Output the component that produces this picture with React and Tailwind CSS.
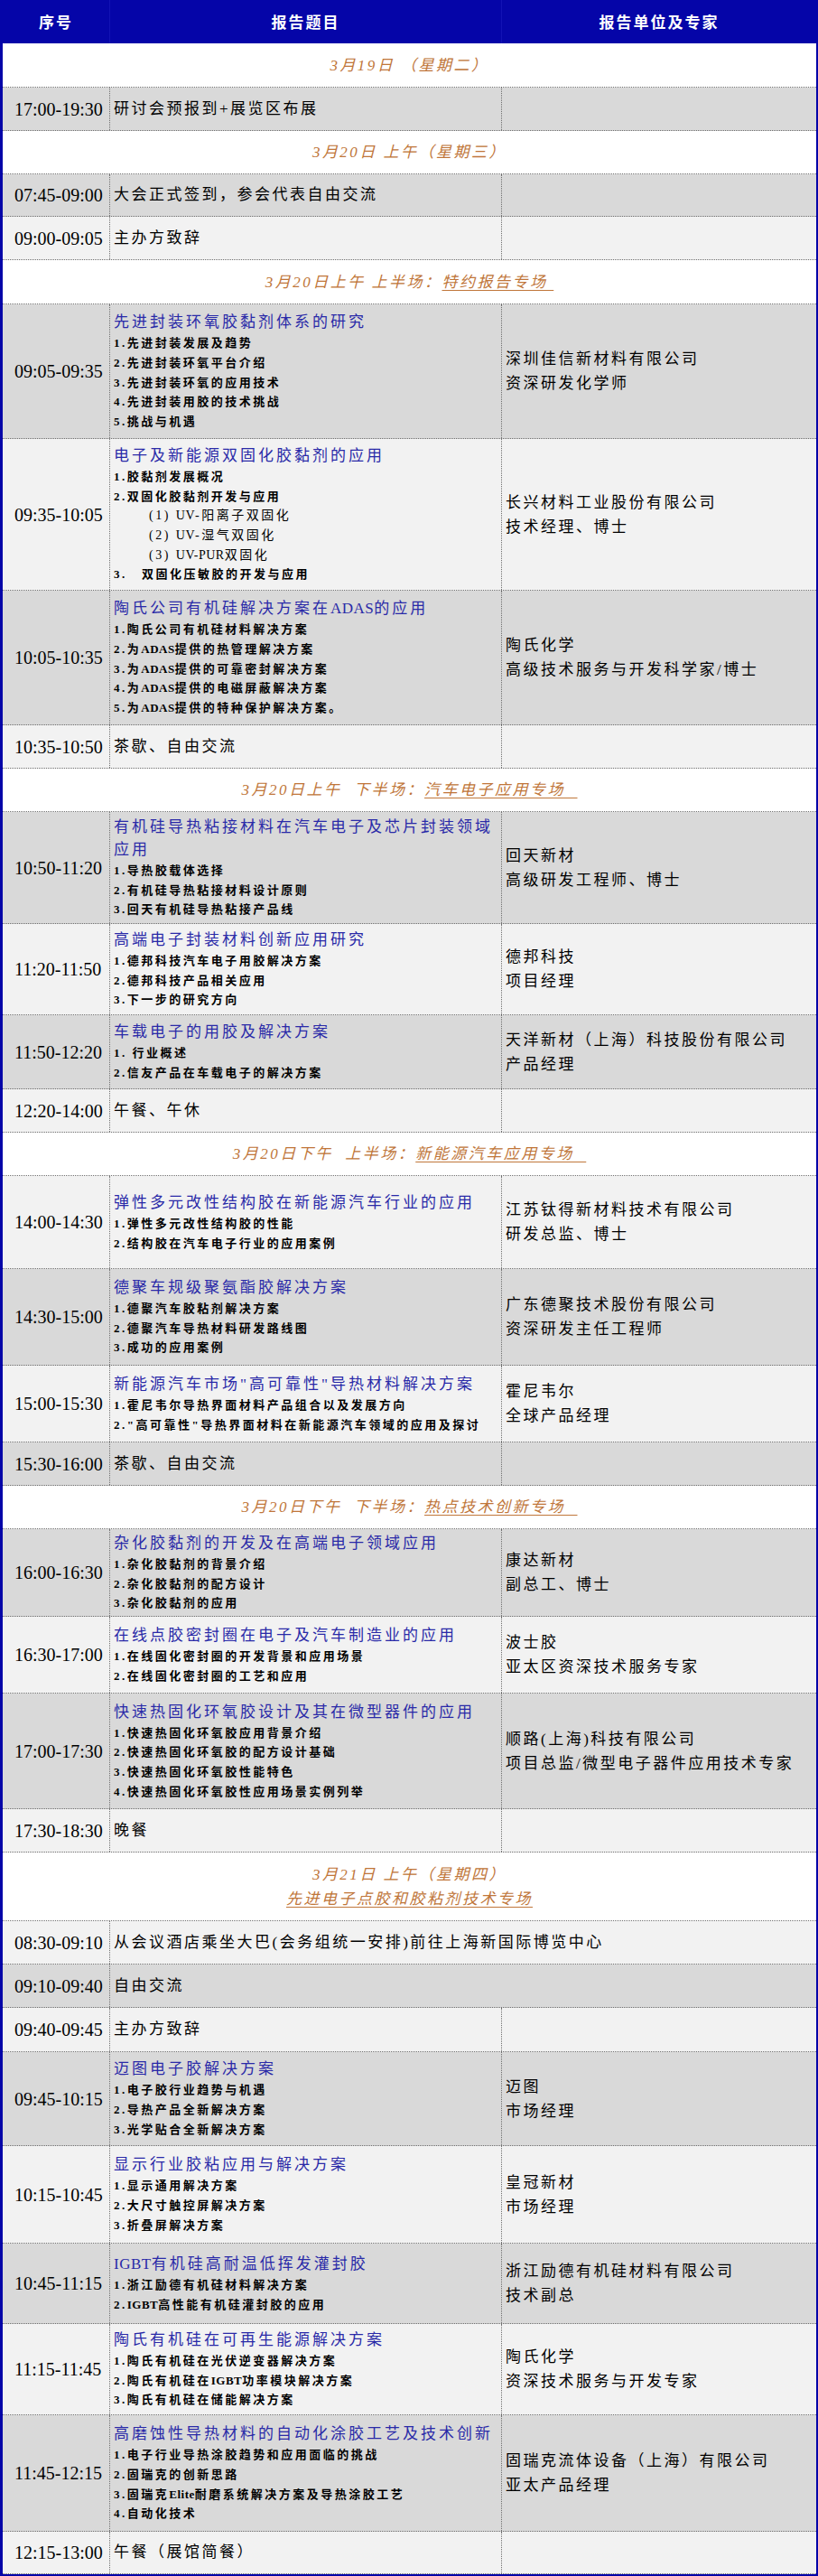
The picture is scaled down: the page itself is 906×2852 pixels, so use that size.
import React from "react";

const FONT = "font-['Liberation_Serif','Noto_Sans_CJK_SC',serif]";
const GRAY = "bg-[#d9d9d9]";
const LIGHT = "bg-[#f2f2f2]";

// latin words in the reference are set without the wide CJK tracking
function fmt(s) {
  if (typeof s !== "string") return s;
  return s.split(/([A-Za-z]+)/).map((p, i) =>
    /^[A-Za-z]+$/.test(p) ? (
      <span key={i} className="tracking-[0.5px]">
        {p}
      </span>
    ) : (
      p
    )
  );
}

function Header() {
  return (
    <div className="grid grid-cols-[118px_434px_349px] h-[48px] bg-[#0505a8] text-white font-bold text-[17px] tracking-[2px]">
      <div className="flex items-center justify-center pt-[4px]">序号</div>
      <div className="flex items-center justify-center pt-[4px] border-l border-[#1212b4]">报告题目</div>
      <div className="flex items-center justify-center pt-[4px] border-l border-[#1212b4]">报告单位及专家</div>
    </div>
  );
}

function DateRow({ h, children }) {
  return (
    <div
      className={`bg-white border-b border-dotted border-[#6f6f6f] flex flex-col items-center justify-center text-[17px] leading-[27px] italic tracking-[2.5px] text-[#c0763a] whitespace-nowrap ${h}`}
    >
      {children}
    </div>
  );
}

function Topic({ children }) {
  return <span className="underline decoration-1 underline-offset-[3px]">{children}</span>;
}

function Row({ h, bg, time, text, title, items, right, span }) {
  return (
    <div className={`grid grid-cols-[118px_434px_349px] border-b border-dotted border-[#6f6f6f] ${h} ${bg}`}>
      <div className="flex items-center pl-[13px] font-['Liberation_Serif',serif] text-[20px] text-black">
        {time}
      </div>
      <div
        className={`flex flex-col justify-center pl-[4px] border-l border-dotted border-[#6f6f6f] ${
          span ? "col-span-2" : ""
        }`}
      >
        {text && <div className="text-[17px] tracking-[2.5px] text-black whitespace-nowrap">{text}</div>}
        {title &&
          title.map((t, i) => (
            <div key={i} className="text-[17px] leading-[25px] tracking-[3px] text-[#2a2aa8] whitespace-nowrap">
              {fmt(t)}
            </div>
          ))}
        {items &&
          items.map((t, i) => (
            <div key={i} className="text-[13px] leading-[21.7px] tracking-[2.5px] font-semibold text-black whitespace-nowrap">
              {fmt(t)}
            </div>
          ))}
      </div>
      {!span && (
        <div className="flex flex-col justify-center pl-[4px] border-l border-dotted border-[#6f6f6f]">
          {right &&
            right.map((t, i) => (
              <div key={i} className="text-[17px] leading-[27px] tracking-[2.5px] text-black whitespace-nowrap">
                {t}
              </div>
            ))}
        </div>
      )}
    </div>
  );
}

export default function App() {
  return (
    <div className={`w-[906px] bg-white ${FONT}`}>
      <div className="border-l-[3px] border-r-[2px] border-b-[2px] border-[#0505a8]">
        <Header />

        <DateRow h="h-[49px]">3月19日 （星期二）</DateRow>
        <Row h="h-[48px]" bg={GRAY} time="17:00-19:30" text="研讨会预报到+展览区布展" />

        <DateRow h="h-[48px]">3月20日 上午（星期三）</DateRow>
        <Row h="h-[47px]" bg={GRAY} time="07:45-09:00" text="大会正式签到，参会代表自由交流" />
        <Row h="h-[48px]" bg={LIGHT} time="09:00-09:05" text="主办方致辞" />

        <DateRow h="h-[49px]">
          <div>
            3月20日上午 上半场：<Topic>特约报告专场&nbsp;</Topic>
          </div>
        </DateRow>
        <Row
          h="h-[149px]"
          bg={GRAY}
          time="09:05-09:35"
          title={["先进封装环氧胶黏剂体系的研究"]}
          items={[
            "1.先进封装发展及趋势",
            "2.先进封装环氧平台介绍",
            "3.先进封装环氧的应用技术",
            "4.先进封装用胶的技术挑战",
            "5.挑战与机遇",
          ]}
          right={["深圳佳信新材料有限公司", "资深研发化学师"]}
        />
        <Row
          h="h-[168px]"
          bg={LIGHT}
          time="09:35-10:05"
          title={["电子及新能源双固化胶黏剂的应用"]}
          items={[
            "1.胶黏剂发展概况",
            "2.双固化胶黏剂开发与应用",
            <span className="pl-[39px] font-normal text-[14px]">
              (1) <span className="tracking-[0.5px]">UV</span>-阳离子双固化
            </span>,
            <span className="pl-[39px] font-normal text-[14px]">
              (2) <span className="tracking-[0.5px]">UV</span>-湿气双固化
            </span>,
            <span className="pl-[39px] font-normal text-[14px]">
              (3) <span className="tracking-[0.5px]">UV-PUR</span>双固化
            </span>,
            <span>
              <span className="inline-block w-[31px]">3.</span>双固化压敏胶的开发与应用
            </span>,
          ]}
          right={["长兴材料工业股份有限公司", "技术经理、博士"]}
        />
        <Row
          h="h-[149px]"
          bg={GRAY}
          time="10:05-10:35"
          title={["陶氏公司有机硅解决方案在ADAS的应用"]}
          items={[
            "1.陶氏公司有机硅材料解决方案",
            "2.为ADAS提供的热管理解决方案",
            "3.为ADAS提供的可靠密封解决方案",
            "4.为ADAS提供的电磁屏蔽解决方案",
            "5.为ADAS提供的特种保护解决方案。",
          ]}
          right={["陶氏化学", "高级技术服务与开发科学家/博士"]}
        />
        <Row h="h-[48px]" bg={LIGHT} time="10:35-10:50" text="茶歇、自由交流" />

        <DateRow h="h-[48px]">
          <div>
            3月20日上午&nbsp;&nbsp;下半场：<Topic>汽车电子应用专场&nbsp;&nbsp;</Topic>
          </div>
        </DateRow>
        <Row
          h="h-[124px]"
          bg={GRAY}
          time="10:50-11:20"
          title={["有机硅导热粘接材料在汽车电子及芯片封装领域", "应用"]}
          items={["1.导热胶载体选择", "2.有机硅导热粘接材料设计原则", "3.回天有机硅导热粘接产品线"]}
          right={["回天新材", "高级研发工程师、博士"]}
        />
        <Row
          h="h-[101px]"
          bg={LIGHT}
          time="11:20-11:50"
          title={["高端电子封装材料创新应用研究"]}
          items={["1.德邦科技汽车电子用胶解决方案", "2.德邦科技产品相关应用", "3.下一步的研究方向"]}
          right={["德邦科技", "项目经理"]}
        />
        <Row
          h="h-[82px]"
          bg={GRAY}
          time="11:50-12:20"
          title={["车载电子的用胶及解决方案"]}
          items={["1. 行业概述", "2.信友产品在车载电子的解决方案"]}
          right={["天洋新材（上海）科技股份有限公司", "产品经理"]}
        />
        <Row h="h-[48px]" bg={LIGHT} time="12:20-14:00" text="午餐、午休" />

        <DateRow h="h-[48px]">
          <div>
            3月20日下午&nbsp;&nbsp;上半场：<Topic>新能源汽车应用专场&nbsp;&nbsp;</Topic>
          </div>
        </DateRow>
        <Row
          h="h-[103px]"
          bg={LIGHT}
          time="14:00-14:30"
          title={["弹性多元改性结构胶在新能源汽车行业的应用"]}
          items={["1.弹性多元改性结构胶的性能", "2.结构胶在汽车电子行业的应用案例"]}
          right={["江苏钛得新材料技术有限公司", "研发总监、博士"]}
        />
        <Row
          h="h-[107px]"
          bg={GRAY}
          time="14:30-15:00"
          title={["德聚车规级聚氨酯胶解决方案"]}
          items={["1.德聚汽车胶粘剂解决方案", "2.德聚汽车导热材料研发路线图", "3.成功的应用案例"]}
          right={["广东德聚技术股份有限公司", "资深研发主任工程师"]}
        />
        <Row
          h="h-[85px]"
          bg={LIGHT}
          time="15:00-15:30"
          title={['新能源汽车市场"高可靠性"导热材料解决方案']}
          items={["1.霍尼韦尔导热界面材料产品组合以及发展方向", '2."高可靠性"导热界面材料在新能源汽车领域的应用及探讨']}
          right={["霍尼韦尔", "全球产品经理"]}
        />
        <Row h="h-[48px]" bg={GRAY} time="15:30-16:00" text="茶歇、自由交流" />

        <DateRow h="h-[48px]">
          <div>
            3月20日下午&nbsp;&nbsp;下半场：<Topic>热点技术创新专场&nbsp;&nbsp;</Topic>
          </div>
        </DateRow>
        <Row
          h="h-[97px]"
          bg={GRAY}
          time="16:00-16:30"
          title={["杂化胶黏剂的开发及在高端电子领域应用"]}
          items={["1.杂化胶黏剂的背景介绍", "2.杂化胶黏剂的配方设计", "3.杂化胶黏剂的应用"]}
          right={["康达新材", "副总工、博士"]}
        />
        <Row
          h="h-[85px]"
          bg={LIGHT}
          time="16:30-17:00"
          title={["在线点胶密封圈在电子及汽车制造业的应用"]}
          items={["1.在线固化密封圈的开发背景和应用场景", "2.在线固化密封圈的工艺和应用"]}
          right={["波士胶", "亚太区资深技术服务专家"]}
        />
        <Row
          h="h-[128px]"
          bg={GRAY}
          time="17:00-17:30"
          title={["快速热固化环氧胶设计及其在微型器件的应用"]}
          items={[
            "1.快速热固化环氧胶应用背景介绍",
            "2.快速热固化环氧胶的配方设计基础",
            "3.快速热固化环氧胶性能特色",
            "4.快速热固化环氧胶性应用场景实例列举",
          ]}
          right={["顺路(上海)科技有限公司", "项目总监/微型电子器件应用技术专家"]}
        />
        <Row h="h-[48px]" bg={LIGHT} time="17:30-18:30" text="晚餐" />

        <DateRow h="h-[76px]">
          <div>3月21日 上午（星期四）</div>
          <div>
            <Topic>先进电子点胶和胶粘剂技术专场</Topic>
          </div>
        </DateRow>
        <Row
          h="h-[48px]"
          bg={LIGHT}
          time="08:30-09:10"
          span
          text="从会议酒店乘坐大巴(会务组统一安排)前往上海新国际博览中心"
        />
        <Row h="h-[48px]" bg={GRAY} time="09:10-09:40" span text="自由交流" />
        <Row h="h-[49px]" bg={LIGHT} time="09:40-09:45" text="主办方致辞" />
        <Row
          h="h-[104px]"
          bg={GRAY}
          time="09:45-10:15"
          title={["迈图电子胶解决方案"]}
          items={["1.电子胶行业趋势与机遇", "2.导热产品全新解决方案", "3.光学贴合全新解决方案"]}
          right={["迈图", "市场经理"]}
        />
        <Row
          h="h-[108px]"
          bg={LIGHT}
          time="10:15-10:45"
          title={["显示行业胶粘应用与解决方案"]}
          items={["1.显示通用解决方案", "2.大尺寸触控屏解决方案", "3.折叠屏解决方案"]}
          right={["皇冠新材", "市场经理"]}
        />
        <Row
          h="h-[89px]"
          bg={GRAY}
          time="10:45-11:15"
          title={["IGBT有机硅高耐温低挥发灌封胶"]}
          items={["1.浙江励德有机硅材料解决方案", "2.IGBT高性能有机硅灌封胶的应用"]}
          right={["浙江励德有机硅材料有限公司", "技术副总"]}
        />
        <Row
          h="h-[101px]"
          bg={LIGHT}
          time="11:15-11:45"
          title={["陶氏有机硅在可再生能源解决方案"]}
          items={["1.陶氏有机硅在光伏逆变器解决方案", "2.陶氏有机硅在IGBT功率模块解决方案", "3.陶氏有机硅在储能解决方案"]}
          right={["陶氏化学", "资深技术服务与开发专家"]}
        />
        <Row
          h="h-[129px]"
          bg={GRAY}
          time="11:45-12:15"
          title={["高磨蚀性导热材料的自动化涂胶工艺及技术创新"]}
          items={[
            "1.电子行业导热涂胶趋势和应用面临的挑战",
            "2.固瑞克的创新思路",
            "3.固瑞克Elite耐磨系统解决方案及导热涂胶工艺",
            "4.自动化技术",
          ]}
          right={["固瑞克流体设备（上海）有限公司", "亚太产品经理"]}
        />
        <Row h="h-[47px]" bg={LIGHT} time="12:15-13:00" text="午餐（展馆简餐）" />
      </div>
    </div>
  );
}
